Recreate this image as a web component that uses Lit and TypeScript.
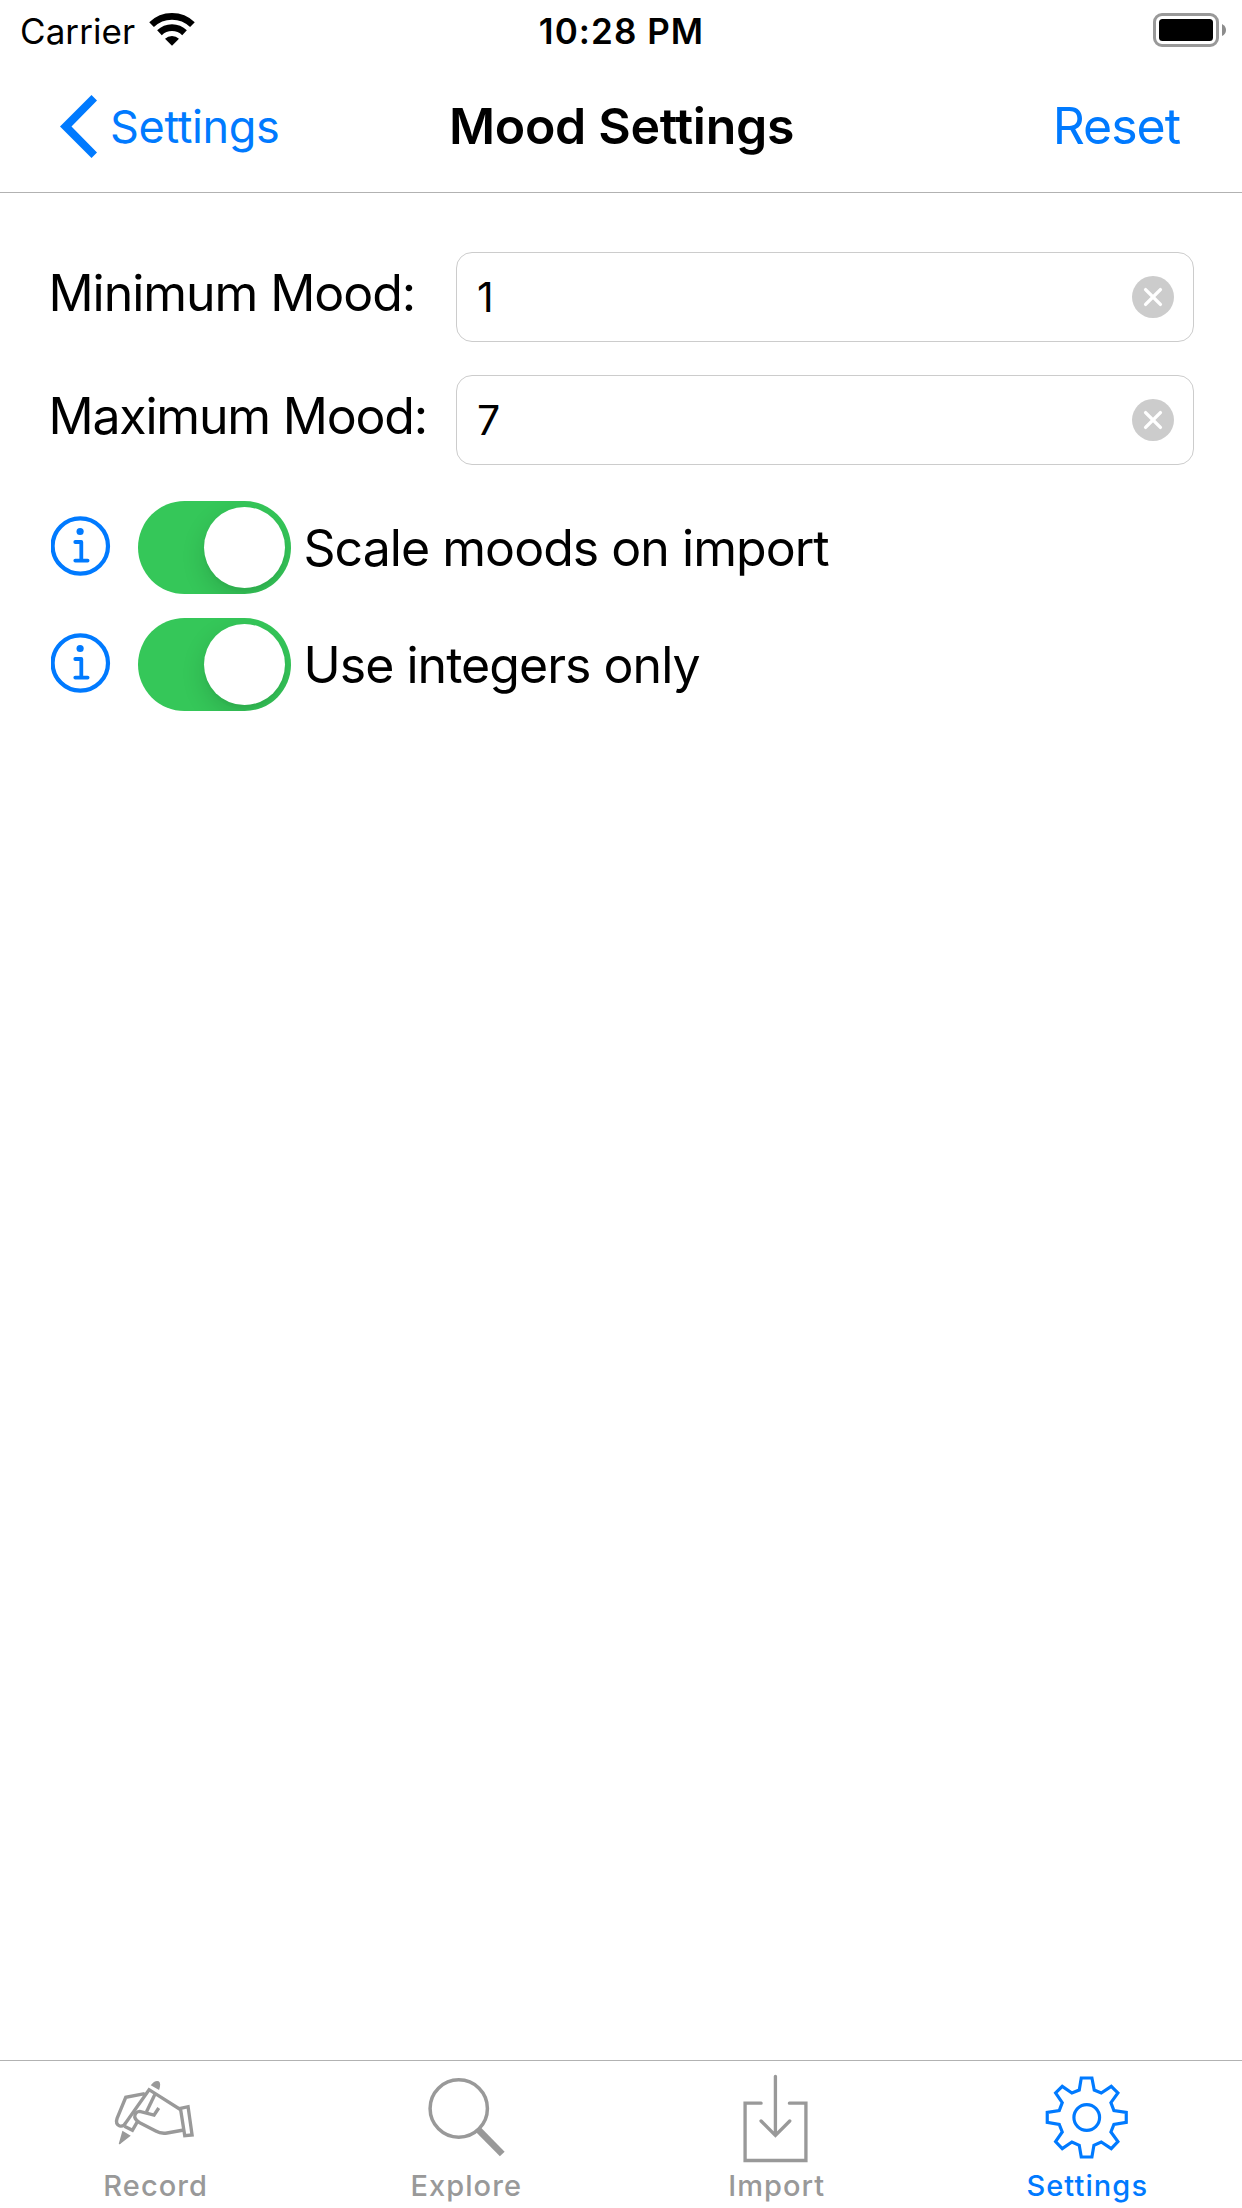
import { LitElement, html, css, svg } from "lit";
import { customElement, property, state } from "lit/decorators.js";
import { classMap } from "lit/directives/class-map.js";

const recordIcon = svg`<svg class="icon" viewBox="60.75 60 270 270">
  <g fill="none" stroke="currentColor" stroke-width="10">
    <path d="M165 131 L108 142 L82 205 Q76 222 90 228 Q102 231 109 217 L178 119 L274 180" />
    <path d="M196 132 L170 186" />
    <path d="M207 174 L193 195 L150 184 Q134 185 135 202 Q138 212 150 218 L198 243 Q213 252 232 249 L282 240" />
    <path d="M143 215 L128 241 L104 229" />
    <path d="M272 175 L295 170 L307 255 L285 257 Z" />
  </g>
  <path fill="currentColor" d="M183 106 Q195 90 207 94 Q215 100 208 120 Z M98 242 L123 257 L94 280 Q90 285 87 281 Z" />
</svg>`;

const exploreIcon = svg`<svg class="icon" viewBox="92.25 60 270 270">
  <circle cx="205.5" cy="175.5" r="86" fill="none" stroke="currentColor" stroke-width="10.5" />
  <path d="M264 239 L336 312" stroke="currentColor" stroke-width="20" />
</svg>`;

const importIcon = svg`<svg class="icon" viewBox="93.75 60 270 270">
  <g fill="none" stroke="currentColor" stroke-width="10" stroke-linecap="round">
    <path d="M184 159.5 H136 V331.5 H318.5 V159.5 H269" />
    <path d="M227 79 V256 M184 213 L227 256 L270 213" />
  </g>
</svg>`;

const settingsIcon = svg`<svg class="icon" viewBox="96.25 60 270 270">
  <g fill="none" stroke="currentColor" stroke-width="9.5">
    <path d="M214 84 H246 L253 120 L274 129 L304 109 L324 129 L303 158 L312 182 L349 187 V217 L312 223 L303 246 L324 275 L304 296 L274 276 L252 286 L246 321 H214 L208 286 L186 276 L157 296 L137 275 L157 246 L148 223 L112 217 V187 L148 182 L157 158 L137 129 L157 109 L186 129 L208 120 Z" />
    <circle cx="230.5" cy="202.5" r="38.5" />
  </g>
</svg>`;

@customElement("status-bar")
class StatusBar extends LitElement {
  static styles = css`
    :host {
      display: grid;
      grid-template-columns: 1fr auto 1fr;
      align-items: center;
      box-sizing: border-box;
      height: 60px;
      padding: 1px 16px 0 20px;
      font-size: 35px;
      line-height: 44px;
    }
    .network { display: flex; align-items: center; gap: 14px; letter-spacing: 0.075px; }
    .wifi { width: 46px; height: 33px; margin-top: -2px; }
    .time { font-weight: 600; letter-spacing: 1.05px; margin-left: -3px; }
    .battery { width: 73px; height: 34px; justify-self: end; margin-top: -1px; }
  `;
  render() {
    return html`
      <div class="network">
        <span>Carrier</span>
        <svg class="wifi" viewBox="-69 -98 138 99">
          <g fill="none" stroke="#000" stroke-width="20">
            <path d="M-61.3 -63.1 A88 88 0 0 1 61.3 -63.1" />
            <path d="M-37.6 -38.7 A54 54 0 0 1 37.6 -38.7" />
          </g>
          <path d="M0 0 L-20.9 -20.5 A30 30 0 0 1 20.9 -20.5 Z" />
        </svg>
      </div>
      <span class="time">10:28 PM</span>
      <svg class="battery" viewBox="0 0 73 34">
        <rect x="1.5" y="1.5" width="63" height="31" rx="7.5" fill="none" stroke="#999" stroke-width="3" />
        <rect x="6" y="6" width="54" height="22" rx="3.5" />
        <path d="M69 11 Q73 13 73 17 Q73 21 69 23 Z" fill="#8c8c8c" />
      </svg>
    `;
  }
}

@customElement("nav-bar")
class NavBar extends LitElement {
  static styles = css`
    :host {
      display: grid;
      grid-template-columns: 1fr auto 1fr;
      align-items: center;
      box-sizing: border-box;
      height: 133px;
      padding: 0 62px 0 60px;
      border-bottom: 1px solid #b2b2b2;
      font-size: 50px;
      line-height: 60px;
    }
    .back {
      display: flex;
      align-items: center;
      gap: 13px;
      color: #007aff;
      font-size: 45px;
      letter-spacing: -0.362px;
    }
    .back-label { padding-top: 2px; }
    .chevron { width: 37px; height: 63px; }
    .title { font-weight: 600; letter-spacing: -0.3px; margin-left: 3px; }
    .reset { justify-self: end; color: #007aff; letter-spacing: -1.034px; }
  `;
  render() {
    return html`
      <div class="back">
        <svg class="chevron" viewBox="0 0 37 63">
          <path d="M31.5 0 L37 5.5 L11.5 31.5 L37 57.5 L31.5 63 L0 31.5 Z" fill="currentColor" />
        </svg>
        <span class="back-label">Settings</span>
      </div>
      <span class="title">Mood Settings</span>
      <span class="reset">Reset</span>
    `;
  }
}

@customElement("mood-field")
class MoodField extends LitElement {
  @property() label = "";
  @property() value = "";
  static styles = css`
    :host { display: flex; align-items: center; height: 90px; }
    .label {
      box-sizing: border-box;
      width: 408px;
      padding-left: 0.5px;
      margin-bottom: 8px;
      font-size: 50px;
      line-height: 60px;
      letter-spacing: -1.05px;
      white-space: nowrap;
    }
    .label.tight { letter-spacing: -1.2px; }
    .box {
      flex: 1;
      display: flex;
      align-items: center;
      box-sizing: border-box;
      height: 90px;
      padding: 0 19px 0 20px;
      border: 1px solid #ccc;
      border-radius: 16px;
    }
    .value { flex: 1; font-size: 41px; line-height: 50px; }
    .clear { width: 42px; height: 42px; }
  `;
  render() {
    return html`
      <span class=${classMap({ label: true, tight: this.label.startsWith("Max") })}>${this.label}</span>
      <div class="box">
        <span class="value">${this.value}</span>
        <svg class="clear" viewBox="0 0 42 42">
          <circle cx="21" cy="21" r="21" fill="#ccc" />
          <path d="M13.6 13.6 L28.4 28.4 M28.4 13.6 L13.6 28.4" stroke="#fff" stroke-width="3.4" stroke-linecap="round" />
        </svg>
      </div>
    `;
  }
}

@customElement("option-row")
class OptionRow extends LitElement {
  @property() label = "";
  @state() on = true;
  static styles = css`
    :host { display: flex; align-items: center; height: 93px; }
    .info { width: 60px; height: 60px; margin: -3px 27.5px 0 2.5px; color: #007aff; }
    .switch {
      display: flex;
      box-sizing: border-box;
      width: 153px;
      height: 93px;
      padding: 6px;
      border-radius: 47px;
      background: #e9e9ea;
      overflow: hidden;
    }
    .switch.on { justify-content: flex-end; background: #35c759; }
    .knob {
      width: 81px;
      height: 81px;
      border-radius: 50%;
      background: #fff;
      box-shadow: 0 9px 24px rgba(0, 0, 0, 0.14), 0 3px 3px rgba(0, 0, 0, 0.03);
    }
    .label { margin-left: 12.5px; font-size: 50px; line-height: 60px; letter-spacing: -0.96px; }
  `;
  render() {
    return html`
      <svg class="info" viewBox="0.7 0 60 60">
        <circle cx="30" cy="30" r="27.7" fill="none" stroke="currentColor" stroke-width="4.2" />
        <circle cx="29.8" cy="15.5" r="3.6" fill="currentColor" />
        <path d="M25 26 H31 V44.6 M25 44.6 H37.3" fill="none" stroke="currentColor" stroke-width="3.8" stroke-linecap="round" stroke-linejoin="round" />
      </svg>
      <div class=${classMap({ switch: true, on: this.on })} @click=${() => (this.on = !this.on)}>
        <div class="knob"></div>
      </div>
      <span class="label">${this.label}</span>
    `;
  }
}

@customElement("tab-bar")
class TabBar extends LitElement {
  static styles = css`
    :host {
      display: grid;
      grid-template-columns: repeat(4, 1fr);
      box-sizing: border-box;
      height: 148px;
      border-top: 1px solid #b2b2b2;
    }
    .tab {
      display: flex;
      flex-direction: column;
      align-items: center;
      padding-top: 9px;
      color: #999;
      font-size: 29px;
      font-weight: 500;
      line-height: 35px;
      letter-spacing: 1.08px;
    }
    .tab.active { color: #007aff; }
    .icon { width: 90px; height: 90px; margin-bottom: 8px; overflow: visible; }
    .name { padding-left: 1px; }
  `;
  render() {
    const tabs = [
      { name: "Record", icon: recordIcon },
      { name: "Explore", icon: exploreIcon },
      { name: "Import", icon: importIcon },
      { name: "Settings", icon: settingsIcon },
    ];
    return tabs.map(
      (t) => html`<div class=${classMap({ tab: true, active: t.name === "Settings" })}>${t.icon}<span class="name">${t.name}</span></div>`
    );
  }
}

@customElement("app-root")
class AppRoot extends LitElement {
  static styles = css`
    :host {
      display: flex;
      flex-direction: column;
      width: 1242px;
      height: 2208px;
      overflow: hidden;
      background: #fff;
      color: #000;
      font-family: Inter, "Liberation Sans", sans-serif;
    }
    .content { flex: 1; padding: 59px 48px 0; }
    .fields { display: grid; gap: 33px; }
    .options { display: grid; gap: 24px; margin-top: 36px; }
  `;
  render() {
    return html`
      <status-bar></status-bar>
      <nav-bar></nav-bar>
      <div class="content">
        <div class="fields">
          <mood-field label="Minimum Mood:" value="1"></mood-field>
          <mood-field label="Maximum Mood:" value="7"></mood-field>
        </div>
        <div class="options">
          <option-row label="Scale moods on import"></option-row>
          <option-row label="Use integers only"></option-row>
        </div>
      </div>
      <tab-bar></tab-bar>
    `;
  }
}
